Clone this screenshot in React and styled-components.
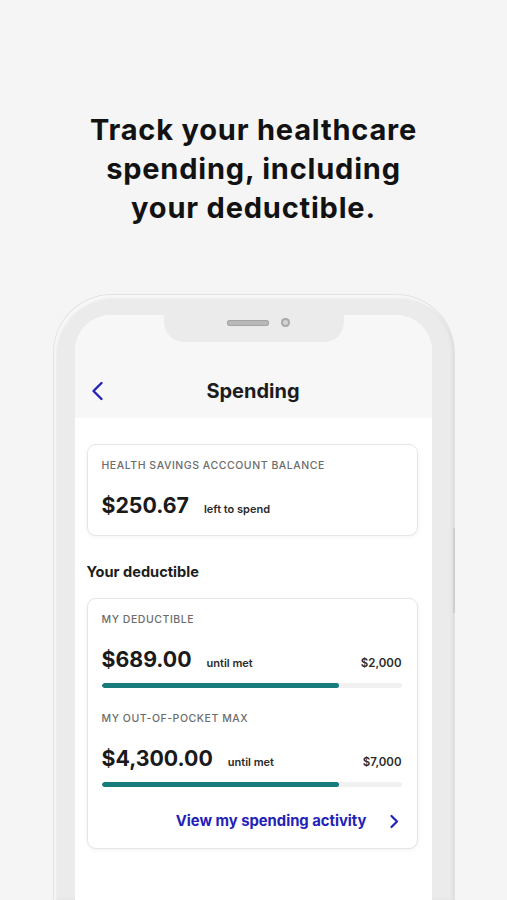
import React from "react";
import styled, { createGlobalStyle } from "styled-components";

const GlobalStyle = createGlobalStyle`
  html, body {
    margin: 0;
    background: #f5f5f5;
  }
  body {
    font-family: Inter, "Noto Sans", sans-serif;
    color: #1c1c1c;
  }
`;

const BLUE = "#2222b8";

const plans = [
  { label: "My deductible", amount: "$689.00", total: "$2,000", filled: 0.79 },
  { label: "My out-of-pocket max", amount: "$4,300.00", total: "$7,000", filled: 0.79 },
];

const App = () => {
  return (
    <>
      <GlobalStyle />
      <Page>
        <Headline>
          Track your healthcare
          <br />
          spending, including
          <br />
          your deductible.
        </Headline>
        <Phone>
          <Notch>
            <Speaker />
            <Camera />
          </Notch>
          <SideButton />
          <Screen>
            <Header>
              <BackButton aria-label="Back">
                <svg width="13" height="20" viewBox="0 0 13 20">
                  <path d="M10.5 2 L2.5 10 L10.5 18" fill="none" stroke={BLUE} strokeWidth="2.4" strokeLinecap="round" strokeLinejoin="round" />
                </svg>
              </BackButton>
              <Title>Spending</Title>
              <span />
            </Header>
            <Content>
              <Card $bottom={12}>
                <Label>Health savings acccount balance</Label>
                <AmountRow>
                  <Amount>$250.67</Amount>
                  <Note>left to spend</Note>
                </AmountRow>
              </Card>
              <SectionTitle>Your deductible</SectionTitle>
              <Card $bottom={17}>
                {plans.map((p, i) => (
                  <Plan key={p.label} $first={i === 0}>
                    <Label>{p.label}</Label>
                    <AmountRow>
                      <Amount>{p.amount}</Amount>
                      <Note>until met</Note>
                      <Total>{p.total}</Total>
                    </AmountRow>
                    <Track>
                      <Fill style={{ width: `${p.filled * 100}%` }} />
                    </Track>
                  </Plan>
                ))}
                <LinkRow>
                  <ActivityLink href="#">View my spending activity</ActivityLink>
                  <svg width="10" height="15" viewBox="0 0 10 15">
                    <path d="M2.5 2 L8 7.5 L2.5 13" fill="none" stroke={BLUE} strokeWidth="2.2" strokeLinecap="round" strokeLinejoin="round" />
                  </svg>
                </LinkRow>
              </Card>
            </Content>
          </Screen>
        </Phone>
      </Page>
    </>
  );
};

const Page = styled.div`
  height: 900px;
  overflow: hidden;
  display: flex;
  flex-direction: column;
  align-items: center;
`;

const Headline = styled.h1`
  margin: 110px 0 0;
  font-size: 29px;
  line-height: 39px;
  font-weight: 700;
  text-align: center;
  letter-spacing: 0.8px;
  color: #121212;
`;

const Phone = styled.div`
  position: relative;
  margin-top: 68px;
  width: 400px;
  flex: 1;
  box-sizing: border-box;
  padding: 20px 22px 0 21px;
  background: #ebebeb;
  border-radius: 58px 58px 0 0;
  box-shadow: 0 0 0 1px #e2e2e2, inset 2px 3px 2px #f7f7f7, inset -2px 0 3px #dedede;
`;

const Notch = styled.div`
  position: absolute;
  top: 19px;
  left: 110px;
  width: 180px;
  height: 28px;
  background: #ebebeb;
  border-radius: 0 0 20px 20px;
  display: flex;
  justify-content: center;
  align-items: flex-start;
  gap: 12px;
  padding-top: 6px;
  box-sizing: border-box;
  z-index: 2;
`;

const Speaker = styled.div`
  margin-left: 10px;
  width: 42px;
  height: 6px;
  border-radius: 3px;
  background: #b9b9b9;
  box-shadow: inset 0 0 0 1px #a4a4a4;
`;

const Camera = styled.div`
  margin-top: -2px;
  width: 9px;
  height: 9px;
  border-radius: 50%;
  background: #d4d4d4;
  box-shadow: inset 0 0 0 2px #a9a9a9;
`;

const SideButton = styled.div`
  position: absolute;
  right: -1px;
  top: 233px;
  width: 2px;
  height: 85px;
  background: #cfcfcf;
`;

const Screen = styled.div`
  height: 100%;
  background: #fff;
  border-radius: 36px 36px 0 0;
  overflow: hidden;
`;

const Header = styled.header`
  height: 103px;
  box-sizing: border-box;
  padding: 62px 16px 0;
  background: #f7f7f7;
  display: grid;
  grid-template-columns: 42px 1fr 42px;
  align-items: start;
`;

const BackButton = styled.button`
  border: 0;
  background: none;
  padding: 0;
  height: 28px;
  display: flex;
  align-items: center;
  cursor: pointer;
`;

const Title = styled.div`
  text-align: center;
  font-size: 20px;
  line-height: 28px;
  font-weight: 700;
  color: #1c1c1c;
`;

const Content = styled.main`
  padding: 26px 14px 0 12px;
`;

const Card = styled.section`
  background: #fff;
  border: 1px solid #e6e6e6;
  border-radius: 9px;
  box-shadow: 0 1px 4px rgba(0, 0, 0, 0.06);
  padding: 14px 15px ${(p) => p.$bottom || 15}px 14px;
`;

const Label = styled.div`
  font-size: 10.5px;
  line-height: 14px;
  font-weight: 500;
  letter-spacing: 0.55px;
  text-transform: uppercase;
  color: #6c6c6c;
`;

const AmountRow = styled.div`
  display: flex;
  align-items: baseline;
  margin-top: 18px;
  line-height: 28px;
`;

const Amount = styled.span`
  font-size: 21.3px;
  font-weight: 700;
  color: #1a1a1a;
`;

const Note = styled.span`
  margin-left: 15px;
  font-size: 11px;
  font-weight: 600;
  color: #2a2a2a;
`;

const Total = styled.span`
  margin-left: auto;
  font-size: 11.5px;
  font-weight: 600;
  color: #2a2a2a;
`;

const SectionTitle = styled.h2`
  margin: 26px 0 16px;
  font-size: 14.6px;
  line-height: 20px;
  font-weight: 700;
  color: #1c1c1c;
`;

const Plan = styled.div`
  margin-top: ${(p) => (p.$first ? 0 : 24)}px;
`;

const Track = styled.div`
  margin-top: 6px;
  height: 5px;
  border-radius: 3px;
  background: #f1f1f1;
  overflow: hidden;
`;

const Fill = styled.div`
  height: 100%;
  border-radius: 3px;
  background: #177b7c;
`;

const LinkRow = styled.div`
  margin-top: 24px;
  display: flex;
  justify-content: flex-end;
  align-items: center;
  gap: 22px;
  padding-right: 3px;
`;

const ActivityLink = styled.a`
  font-size: 14.8px;
  line-height: 20px;
  font-weight: 700;
  color: ${BLUE};
  text-decoration: none;
`;

export default App;
